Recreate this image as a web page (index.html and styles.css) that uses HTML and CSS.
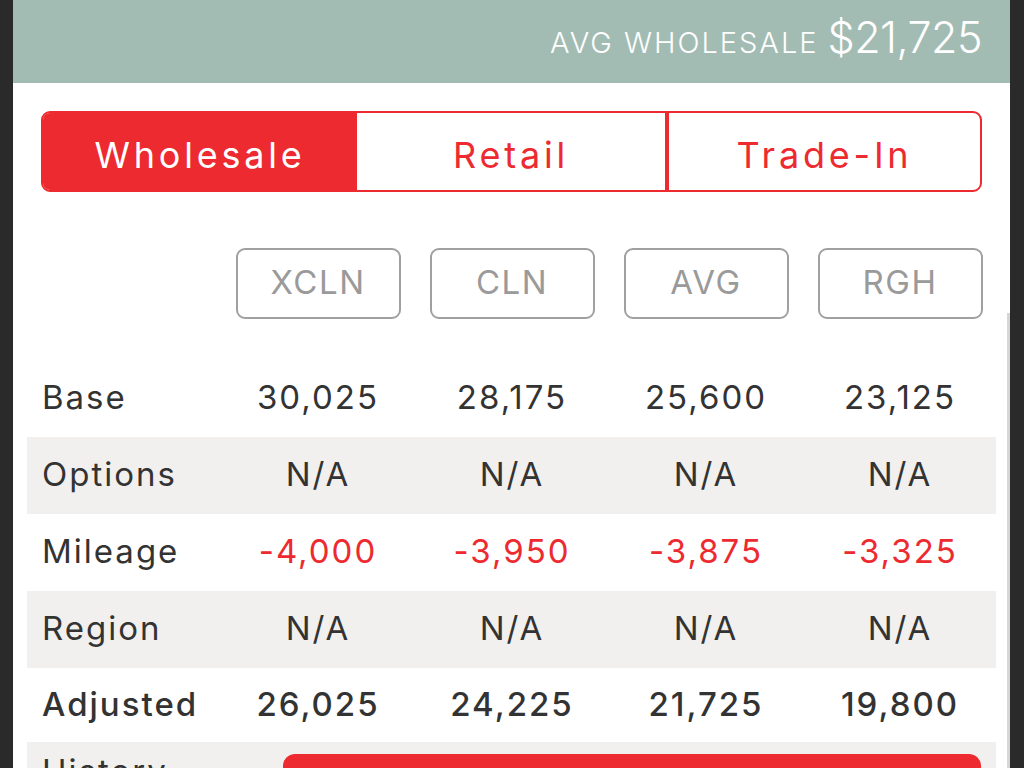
FILE: index.html
```html
<!DOCTYPE html>
<html lang="en">
<head>
<meta charset="utf-8">
<title>Valuation</title>
<link rel="stylesheet" href="styles.css">
</head>
<body>
<div class="app">
  <header class="summary">
    <span class="summary-label">AVG WHOLESALE</span>
    <span class="summary-value">$21,725</span>
  </header>

  <nav class="tabs">
    <div class="tab active">Wholesale</div>
    <div class="tab">Retail</div>
    <div class="tab tab-last">Trade-In</div>
  </nav>

  <section class="table">
    <div class="row head">
      <div class="cell label"></div>
      <div class="cell"><span class="grade">XCLN</span></div>
      <div class="cell"><span class="grade">CLN</span></div>
      <div class="cell"><span class="grade">AVG</span></div>
      <div class="cell"><span class="grade">RGH</span></div>
    </div>
    <div class="row">
      <div class="cell label">Base</div>
      <div class="cell">30,025</div>
      <div class="cell">28,175</div>
      <div class="cell">25,600</div>
      <div class="cell">23,125</div>
    </div>
    <div class="row alt">
      <div class="cell label">Options</div>
      <div class="cell">N/A</div>
      <div class="cell">N/A</div>
      <div class="cell">N/A</div>
      <div class="cell">N/A</div>
    </div>
    <div class="row neg">
      <div class="cell label">Mileage</div>
      <div class="cell">-4,000</div>
      <div class="cell">-3,950</div>
      <div class="cell">-3,875</div>
      <div class="cell">-3,325</div>
    </div>
    <div class="row alt">
      <div class="cell label">Region</div>
      <div class="cell">N/A</div>
      <div class="cell">N/A</div>
      <div class="cell">N/A</div>
      <div class="cell">N/A</div>
    </div>
    <div class="row total">
      <div class="cell label">Adjusted</div>
      <div class="cell">26,025</div>
      <div class="cell">24,225</div>
      <div class="cell">21,725</div>
      <div class="cell">19,800</div>
    </div>
    <div class="row alt history">
      <div class="cell label">History</div>
      <button class="history-btn" type="button">View History</button>
    </div>
  </section>

  <div class="scrollbar"></div>
</div>
</body>
</html>
```

FILE: styles.css
```css
* { box-sizing: border-box; }

html, body {
  margin: 0;
  height: 768px;
  overflow: hidden;
}

body {
  background: #2a2a2a;
  font-family: "Inter", "DejaVu Sans", sans-serif;
  color: #333333;
}

.app {
  position: relative;
  margin-left: 13px;
  width: 997px;
  height: 768px;
  background: #ffffff;
  overflow: hidden;
}

.summary {
  height: 83px;
  background: #a3bcb3;
  color: #ffffff;
  display: flex;
  justify-content: flex-end;
  align-items: baseline;
  padding: 11px 28px 0 0;
  gap: 9px;
}

.summary-label {
  font-size: 29px;
  font-weight: 300;
  letter-spacing: 2px;
}

.summary-value {
  font-size: 43px;
  font-weight: 300;
  letter-spacing: -0.5px;
}

.tabs {
  margin: 28px 28px 0 28px;
  height: 81px;
  display: grid;
  grid-template-columns: 314px 308px 1fr;
  border: 2px solid #ec2a2f;
  border-radius: 9px;
  overflow: hidden;
}

.tab {
  display: flex;
  align-items: center;
  justify-content: center;
  color: #ec2a2f;
  font-size: 36px;
  letter-spacing: 3.8px;
  padding-top: 6px;
}

.tab.active {
  background: #ec2a2f;
  color: #ffffff;
}

.tab-last {
  border-left: 4px solid #ec2a2f;
}

.table {
  margin: 56px 14px 0 14px;
}

.row {
  display: grid;
  grid-template-columns: repeat(5, 194px);
  height: 77px;
  align-items: center;
  font-size: 33px;
  letter-spacing: 2px;
}

.row.head {
  height: 71px;
  margin-bottom: 41px;
}

.cell {
  text-align: center;
  white-space: nowrap;
  padding-bottom: 3px;
}

.cell.label {
  text-align: left;
  padding-left: 15px;
}

.grade {
  display: flex;
  align-items: center;
  justify-content: center;
  margin: 0 auto;
  width: 165px;
  height: 71px;
  border: 2px solid #a0a0a0;
  border-radius: 9px;
  color: #9a9a9a;
  font-size: 33px;
  letter-spacing: 1.5px;
  padding-bottom: 3px;
}

.row.head .cell {
  padding-bottom: 0;
}

.row.alt {
  background: #f1f0ee;
}

.row.neg .cell:not(.label) {
  color: #ec2a2f;
}

.row.total {
  height: 74px;
  font-weight: 500;
}

.row.history {
  height: 100px;
  align-items: start;
  padding-top: 9px;
  grid-template-columns: 256px 1fr;
}

.history-btn {
  margin: 3px 15px 0 0;
  height: 72px;
  border: none;
  border-radius: 12px;
  background: #ec2a2f;
  color: #ffffff;
  font-family: inherit;
  font-size: 33px;
}

.scrollbar {
  position: absolute;
  left: 994px;
  top: 313px;
  width: 3px;
  height: 455px;
  background: #d6d6d6;
}
```
